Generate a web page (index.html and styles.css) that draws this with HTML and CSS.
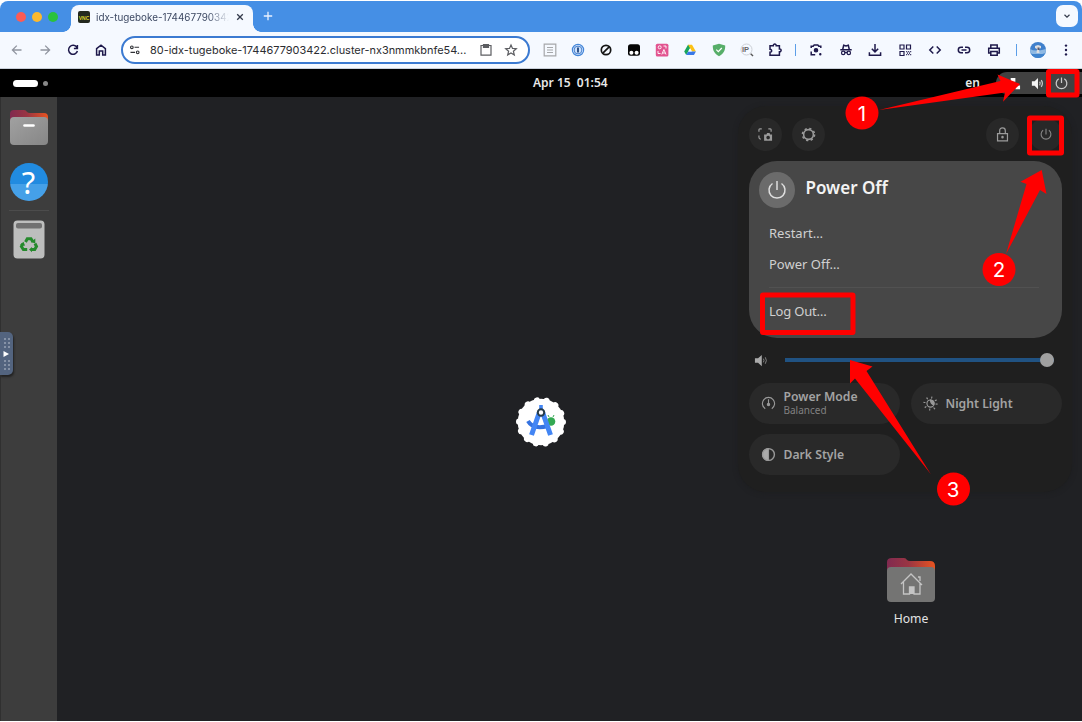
FILE: index.html
```html
<!DOCTYPE html>
<html lang="en">
<head>
<meta charset="utf-8">
<title>idx-tugeboke</title>
<link rel="stylesheet" href="styles.css">
</head>
<body>
<div class="browser">
  <header class="tabstrip">
    <div class="lights"><i class="red"></i><i class="amber"></i><i class="green"></i></div>
    <div class="tab">
      <span class="favicon">VNC</span>
      <span class="tab-title">idx-tugeboke-174467790342</span>
      <svg class="close" viewBox="0 0 8 8"><path d="M1.2 1.2l5.600 5.600M6.800 1.200l-5.600 5.600"/></svg>
    </div>
    <svg class="plus" viewBox="0 0 10 10"><path d="M5 .8v8.400M.8 5h8.400"/></svg>
    <div class="tab-menu"><svg viewBox="0 0 8 8"><path d="M1.500 2.800L4 5.200l2.500-2.400"/></svg></div>
  </header>

  <nav class="toolbar">
    <div class="nav">
      <svg class="ic muted" viewBox="0 0 20 20"><path d="M14.500 10H5.500M9.800 5.600L5.400 10l4.400 4.400"/></svg>
      <svg class="ic muted" viewBox="0 0 20 20"><path d="M5.500 10h9M10.200 5.600l4.400 4.400-4.400 4.400"/></svg>
      <svg class="ic" viewBox="0 0 20 20"><path class="thick" d="M13.900 7.500A4.500 4.500 0 1 0 14.400 11M14.400 5v3.500h-3.500"/></svg>
      <svg class="ic" viewBox="0 0 20 20"><path class="thick" d="M5.600 8.600L10 5.200l4.400 3.400v6.300h-2.700v-3.800H8.300v3.800H5.600z"/></svg>
    </div>
    <div class="address">
      <svg class="ic site" viewBox="0 0 20 20"><circle cx="6.500" cy="7" r="1.500"/><path d="M9.500 7h5M5 12.600h5"/><circle cx="13" cy="12.600" r="1.500"/></svg>
      <span class="url">80-idx-tugeboke-1744677903422.cluster-nx3nmmkbnfe54...</span>
      <svg class="ic grey" viewBox="0 0 20 20"><path d="M5 5.500h10v9.700H5z"/><path d="M7.500 4.500h5v3h-5z" fill="#5c5d61"/></svg>
      <svg class="ic grey" viewBox="0 0 20 20"><path d="M10 4.900l1.500 3.500 3.800.3-2.900 2.500.9 3.700-3.300-2-3.300 2 .9-3.700-2.900-2.500 3.800-.3z"/></svg>
    </div>
    <div class="extensions">
      <svg class="ic" viewBox="0 0 20 20"><g stroke="#a5a7aa"><path d="M4.200 4.200h11.600v11.600H4.200z"/><path d="M7 7.500h6M7 10h6M7 12.500h6"/></g></svg>
      <svg class="ic" viewBox="0 0 20 20"><circle cx="10" cy="10" r="5.600" fill="#dceaff" stroke="#4386d8"/><circle cx="10" cy="10" r="3.900" fill="#cfe2fb" stroke="#3675ca" stroke-width=".9"/><path d="M10 7.500v5" stroke="#123a75" stroke-width="1.700"/></svg>
      <svg class="ic" viewBox="0 0 20 20"><g stroke="#151515" stroke-width="1.700"><circle cx="10" cy="10" r="4.700"/><path d="M6.800 13.200l6.400-6.400"/></g></svg>
      <svg class="ic" viewBox="0 0 20 20"><rect x="4" y="4.300" width="12" height="11.400" rx="2.500" fill="#050505" stroke="none"/><circle cx="7.400" cy="12.800" r="2" fill="#fff" stroke="none"/><circle cx="12.600" cy="12.800" r="2" fill="#fff" stroke="none"/></svg>
      <svg class="ic" viewBox="0 0 20 20"><rect x="3.800" y="3.800" width="12.600" height="12.600" rx="1.500" fill="#e25490" stroke="none"/><g stroke="#fff" stroke-width=".9"><circle cx="7.700" cy="7.300" r="1.500"/><path d="M6 11v2.500h2.500M11.500 6h2.500v2.500M9.800 14.500l2.100-5 2.100 5M10.600 13h2.700"/></g></svg>
      <svg class="ic" viewBox="0 0 20 20"><g stroke="none"><path fill="#18a55c" d="M8 4.800L4.200 11.500l2 3.500 5.200-9.100z"/><path fill="#fbc116" d="M8 4.800h4l3.900 6.700H12z"/><path fill="#3979e8" d="M6.200 15l2-3.500h7.700l-2 3.500z"/><path fill="#f8fbff" d="M10 8.300l1.800 3.200H8.200z"/></g></svg>
      <svg class="ic" viewBox="0 0 20 20"><path fill="#57ae69" stroke="none" d="M10 3.800l6.200 1.800c.2 5-1.700 8.400-6.200 10.700-4.500-2.300-6.400-5.700-6.200-10.700z"/><path d="M7.300 9.600l2 2 3.500-3.600" stroke="#fff"/></svg>
      <svg class="ic" viewBox="0 0 20 20"><circle cx="9.500" cy="9.500" r="5.500" stroke="#c0c4ca" stroke-width=".8"/><text x="5" y="12.200" class="ip">IP</text><path d="M13.700 13.700l2.300 2.300" stroke="#555" stroke-width="1.400"/></svg>
      <svg class="ic" viewBox="0 0 20 20"><path class="thick" d="M5 5.700h3.300c-.1-2.200 3-2.200 2.900 0h3.200v3.200c2.300-.1 2.300 3 0 2.900v3.500H5v-3c2.200.1 2.200-3.200 0-3.100z"/></svg>
    </div>
    <i class="rule"></i>
    <div class="actions">
      <svg class="ic" viewBox="0 0 20 20"><path class="thick" d="M5.200 8V6.200h2l1-1.300h3.600l1 1.300h2V8M5.200 11.500v3.300h4"/><circle cx="10" cy="10.300" r="1.700" fill="#1e194b"/><circle cx="14.300" cy="14.200" r=".6" fill="#1e194b"/></svg>
      <svg class="ic" viewBox="0 0 20 20"><path class="thick" d="M4.300 9.700h11.400M6.700 9.500l1-4.200 2.300.7 2.300-.7 1 4.200M8.700 12.500h2.600"/><circle cx="7.200" cy="12.900" r="1.700"/><circle cx="12.800" cy="12.900" r="1.700"/></svg>
      <svg class="ic" viewBox="0 0 20 20"><path class="thick" d="M10 4v7.500M6.800 8.700l3.200 3.200 3.200-3.200M4.400 12.300v3h11.200v-3"/></svg>
      <svg class="ic" viewBox="0 0 20 20"><path d="M5 5h4v4H5zM11.500 5h4v4h-4zM5 11.500h4v4H5z"/><path stroke-dasharray="1 1" d="M11.200 11.700h5M12 13.200h4M11.200 14.700h5"/></svg>
      <svg class="ic" viewBox="0 0 20 20"><path class="thick" d="M8.300 6.500L4.800 10l3.500 3.500M11.700 6.500l3.500 3.500-3.500 3.500"/></svg>
      <svg class="ic" viewBox="0 0 20 20"><path class="thick" d="M9 7.300H7a2.700 2.700 0 0 0 0 5.400h2M11 7.300h2a2.700 2.700 0 0 1 0 5.400h-2M7.500 10h5"/></svg>
      <svg class="ic" viewBox="0 0 20 20"><path class="thick" d="M6.800 8V5h6.400v3M6.800 13H4.700V8.200h10.600V13h-2.100M6.800 11.500h6.400v3.700H6.800z"/></svg>
    </div>
    <i class="rule second"></i>
    <svg class="avatar" viewBox="0 0 16 16"><defs><clipPath id="av"><circle cx="8" cy="8" r="8"/></clipPath></defs><g clip-path="url(#av)"><path fill="#3f80cc" d="M0 0h16v16H0z"/><path fill="#8fb9e3" d="M0 7q5 3 16 0v5H0z"/><path fill="#3e83ce" d="M0 11q6 3 16 0v5H0z"/><path fill="#dcdde0" d="M5 4l3-1 3 1v2l-2 1 .5 4h-3L7 7 5 6z"/><path fill="#575a6c" d="M7.500 5.500h2v2.500h-2z"/></g></svg>
    <svg class="ic" viewBox="0 0 20 20"><g fill="#1e194b" stroke="none"><circle cx="10" cy="5.600" r="1.200"/><circle cx="10" cy="10" r="1.200"/><circle cx="10" cy="14.400" r="1.200"/></g></svg>
  </nav>

  <main class="screen">
    <div class="topbar">
      <div class="workspaces"><i class="current"></i><i class="other"></i></div>
      <time class="clock">Apr 15&nbsp; 01:54</time>
      <div class="status">
        <span>en</span>
        <div class="tray">
          <svg viewBox="0 0 16 16" class="net"><path fill="#fff" d="M5 2h5v4H5zM2 10h4v4H2zM10 10h5v4h-5z"/><path d="M7.500 6v2.500M4 10V8.500h8V10" stroke="#fff" fill="none"/></svg>
          <svg viewBox="0 0 16 16" class="sound"><path class="cone" d="M2 5.500h3L8.500 2v12L5 10.500H2z"/><path d="M10.300 6q1.300 2 0 4M12 4.500q2.400 3.500 0 7" /></svg>
          <svg viewBox="0 0 16 16" class="power"><path d="M8 1.500v6M5 3a5.700 5.700 0 1 0 6 0"/></svg>
        </div>
      </div>
    </div>

    <div class="desktop">
      <aside class="dock">
        <svg class="files" viewBox="0 0 40 38"><defs><linearGradient id="fold"><stop stop-color="#812a50"/><stop offset=".45" stop-color="#9a3543"/><stop offset="1" stop-color="#e95420"/></linearGradient><linearGradient id="silver" x2="1" y2="1"><stop stop-color="#a1a1a1"/><stop offset="1" stop-color="#868686"/></linearGradient></defs><path fill="url(#fold)" d="M1 12V5q0-4 4-4h10q2 0 3 2 1 1 3 1h14q4 0 4 4v9H1z"/><rect x="1" y="8" width="38" height="28" rx="4" fill="url(#silver)"/><path d="M15.500 16.500h9" stroke="#fff" stroke-width="2.600" stroke-linecap="round"/></svg>
        <div class="help">?</div>
        <hr>
        <svg class="trash" viewBox="0 0 32 39"><rect x=".5" y=".5" width="31" height="38" rx="4" fill="#bdbebd"/><rect x="3" y="3" width="26" height="5.500" rx="2" fill="#717171"/><g fill="none" stroke="#258a2c" stroke-width="3"><path d="M12.500 22l1.800-3.200h3.700l2 3.200"/><path d="M22 23.500l1.500 3-1.800 3.100h-3.500"/><path d="M14.200 29.600h-3.800l-2-3.100 1.600-2.700"/></g><path fill="#258a2c" d="M22.300 18.500v5l-4.300-1.500zM19 27v5.200l-3-2.600zM7 24.700l3.500-3 1.500 4z"/></svg>
      </aside>
      <section class="wallpaper">
        <svg class="studio" viewBox="0 0 50 50"><circle cx="25" cy="25" r="23.300" fill="#fff"/><circle class="scallop" cx="25" cy="25" r="22"/><circle cx="35" cy="24.500" r="4.300" fill="#33a852"/><path d="M33 20l-1-2M37 20l1-2" stroke="#33a852"/><path d="M12 24q5 9 20 5" fill="none" stroke="#3472e0" stroke-width="4"/><path d="M23.500 15L15.500 38M26.500 15l8 23" stroke="#4285f4" stroke-width="5"/><path d="M23.200 8h3.600v7h-3.600z" fill="#4285f4"/><circle cx="25" cy="15.500" r="3.200" fill="#fff" stroke="#253b4a" stroke-width="2"/></svg>
        <div class="home">
          <svg viewBox="0 0 48 46"><path fill="url(#fold)" d="M0 15V5q0-4 5-4h12q2 0 3 2 1 1 3 1h20q5 0 5 5v9H0z"/><rect y="10" width="48" height="35" rx="4" fill="#747473"/><path d="M14 27l10-10 11 11M16.500 25v12h6v-7h4.500v7h6V26M31 20h2v4" fill="none" stroke="#c4c4c4" stroke-width="1.300"/><path d="M22.500 30H27v7h-4.500z" fill="#c4c4c4"/></svg>
          <span>Home</span>
        </div>
      </section>
    </div>

    <div class="vnc-handle"><i class="grip"></i><svg viewBox="0 0 6 6"><path d="M.5 0L6 3 .5 6z" fill="#fff"/></svg><i class="grip"></i></div>

    <section class="quick">
      <div class="round-row">
        <span class="round"><svg viewBox="0 0 16 16"><path d="M1 5V3q0-1 1-1h2M11 2h2q1 0 1 1v2M1 9v2q0 2 2 2"/><path fill="#9b9b9b" fill-rule="evenodd" stroke="none" d="M6.500 8H9l.7-1.500h2.600L13 8h2v6.700H6.500zM10.800 9.300a1.900 1.900 0 1 0 .01 0z"/></svg></span>
        <span class="round"><svg viewBox="0 0 16 16"><circle cx="8" cy="8" r="6.500" stroke-dasharray="2.400 2.705" stroke-width="1.600"/><circle cx="8" cy="8" r="5.200" stroke-width="1.700"/></svg></span>
        <span class="round lock"><svg viewBox="0 0 16 16"><path d="M2.700 7h10.600v7.700H2.700zM5 7V4q0-3 3-3t3 3v3"/><circle cx="8" cy="10.800" r=".7"/></svg></span>
        <span class="round off"><svg viewBox="0 0 16 16"><path d="M8 1.500v6.500M4.700 3.200a5.600 5.600 0 1 0 6.600 0"/></svg></span>
      </div>
      <div class="power-card">
        <div class="power-head"><span class="big"><svg viewBox="0 0 20 20"><path d="M10 1v9M5.500 3.500a8 8 0 1 0 9 0"/></svg></span><h2>Power Off</h2></div>
        <ul><li>Restart…</li><li>Power Off…</li></ul>
        <hr>
        <div class="logout">Log Out…</div>
      </div>
      <div class="volume">
        <svg viewBox="0 0 16 16"><path fill="#aaa" d="M1 5.700h3.300L8.300 2v12l-4-3.700H1z"/><path d="M10 6q1.300 2 0 4M12 4.500q2.400 3.500 0 7" fill="none" stroke="#858585"/></svg>
        <div class="track"><i class="knob"></i></div>
      </div>
      <div class="tiles">
        <div class="tile"><svg viewBox="0 0 16 16"><path d="M4.500 13.500a6.500 6.500 0 1 1 7 0M8 3.500V8"/><circle cx="8" cy="9" r="1.200" fill="#999"/></svg><p><b>Power Mode</b><small>Balanced</small></p></div>
        <div class="tile"><svg viewBox="0 0 16 16"><circle cx="8" cy="8" r="6.500" stroke-dasharray="1.200 3.905" stroke-width="2.200"/><circle cx="8" cy="8" r="3.800"/><path d="M8 4.200a3.800 3.800 0 0 1 3.600 5Q8 8.500 8 4.200z" fill="#999"/></svg><p><b>Night Light</b></p></div>
        <div class="tile"><svg viewBox="0 0 16 16"><circle cx="8" cy="8" r="6.300" stroke-width="1.500"/><path d="M8 1.700a6.300 6.300 0 0 0 0 12.600z" fill="#aaa"/></svg><p><b>Dark Style</b></p></div>
      </div>
    </section>
  </main>
</div>

<svg class="notes" viewBox="0 0 1082 722">
  <g class="frames"><rect x="1048.500" y="71.500" width="28.500" height="23.500" rx=".5"/><rect x="1029.500" y="118" width="32" height="35" rx=".5"/><rect x="762.500" y="295" width="90.500" height="37.500" rx=".5"/></g>
  <g class="fill"><path d="M879 110L1005 92.500 1003 101.700 1020 84 997.500 74.500 1000.500 81z"/><path d="M1006 254L1026.500 184 1020.500 181.700 1041.700 170 1046.500 194 1040 190z"/><path d="M850 360L872.500 366.500 866.500 371 930.700 474 855 378.500 850 383.500z"/><circle cx="862" cy="113" r="16.500"/><circle cx="999" cy="269.500" r="16.500"/><circle cx="953.500" cy="489" r="16.500"/></g>
  <g class="digits"><text x="862" y="120.500">1</text><text x="999" y="277">2</text><text x="953" y="496.500">3</text></g>
</svg>
</body>
</html>
```
FILE: styles.css
```css
* { box-sizing: border-box; }
body { margin: 0; width: 1082px; height: 722px; overflow: hidden; background: #fff; font-family: "Noto Sans", sans-serif; }
.browser { position: relative; height: 722px; padding-top: 1px; }
svg { display: block; flex: none; }
h2, p, ul { margin: 0; padding: 0; list-style: none; }

.tabstrip { display: flex; height: 31px; background: #458fe5; border-radius: 8px 8px 0 0; }
.lights { display: flex; gap: 6px; align-items: center; width: 71px; padding-left: 16px; }
.lights i { width: 10px; height: 10px; border-radius: 50%; }
.red { background: #fc5b55; }
.amber { background: #fcb92d; }
.green { background: #2ac23d; }
.tab { display: flex; align-items: center; width: 182px; height: 27px; margin-top: 4px; padding: 0 9px 4px 7px; background: #f5f9ff; border-radius: 8px 8px 0 0; position: relative; }
.tab::before, .tab::after { content: ""; position: absolute; bottom: 0; width: 8px; height: 8px; }
.tab::before { left: -8px; background: radial-gradient(circle at 0 0, #458fe5 7.500px, #f5f9ff 8px); }
.tab::after { right: -8px; background: radial-gradient(circle at 100% 0, #458fe5 7.500px, #f5f9ff 8px); }
.favicon { width: 12px; height: 12px; border-radius: 2px; background: #24291f; color: #dfd42a; font: bold 5px/14px "Liberation Sans", sans-serif; text-align: center; }
.tab-title { width: 133px; margin-left: 6px; white-space: nowrap; font: 9.900px/14px Inter, sans-serif; color: #3d4963; -webkit-mask-image: linear-gradient(90deg, #000 112px, transparent 133px); }
.close { width: 8px; height: 8px; margin-left: auto; fill: none; stroke: #333a4b; stroke-width: 1.300; }
.plus { width: 10px; height: 10px; margin: 10px 0 0 10px; fill: none; stroke: #e8f1ff; stroke-width: 1.300; }
.tab-menu { display: flex; align-items: center; justify-content: center; width: 22px; height: 22px; margin: 4px 4px 0 auto; border-radius: 7px; background: #f5f9ff; }
.tab-menu svg { width: 8px; fill: none; stroke: #333a4b; stroke-width: 1.200; }

.toolbar { display: flex; align-items: center; height: 37px; padding-left: 7px; background: #f5f9ff; border-bottom: 1px solid #c9d0da; }
.ic { width: 20px; height: 20px; fill: none; stroke: #1e194b; stroke-width: 1.200; }
.thick { stroke-width: 1.500; }
.muted { stroke: #9095a0; stroke-width: 1.300; }
.grey { stroke: #5c5d61; }
.nav { display: flex; gap: 8px; }
.address { display: flex; align-items: center; width: 409px; height: 28px; margin-left: 10px; padding-left: 3px; border: 2px solid #3b7ad1; border-radius: 14px; background: #fff; }
.site { width: 18px; stroke: #303136; }
.url { width: 326px; margin-left: 6px; font: 10.950px/16px Inter, sans-serif; color: #2b2c30; white-space: nowrap; }
.address .grey + .grey { margin-left: 5px; }
.extensions { display: flex; gap: 8.100px; margin-left: 10px; }
.ip { font: bold 7.500px "Liberation Sans", sans-serif; fill: #666; stroke: none; }
.rule { width: 1.500px; height: 12px; margin-left: 10px; background: #5c9ee8; }
.actions { display: flex; gap: 9.600px; margin-left: 10px; }
.rule.second { margin-left: 12px; }
.avatar { width: 16px; height: 16px; margin: 0 10px 0 13px; }

.screen { display: flex; flex-direction: column; height: 652px; }
.topbar { display: grid; grid-template-columns: 520px auto 1fr; align-items: center; height: 28px; padding-left: 13px; background: #000; color: #e8e8e8; font-size: 12px; font-weight: 600; }
.workspaces { display: flex; align-items: center; gap: 5px; }
.current { width: 25px; height: 7px; border-radius: 4px; background: #fff; }
.other { width: 5px; height: 5px; border-radius: 50%; background: #888; }
.clock { margin-top: -1px; line-height: 27px; }
.status { display: flex; align-items: center; justify-content: flex-end; gap: 16px; }
.status span { margin-top: -2px; }
.tray { display: flex; align-items: center; gap: 9px; width: 86px; height: 22px; padding-left: 10px; border-radius: 11px 0 0 11px; background: #414141; }
.tray svg { width: 15px; height: 15px; fill: none; stroke: #ccc; stroke-width: 1.300; }
.tray .net { stroke: none; }
.cone { fill: #f5f5f5; stroke: none; }
.desktop { display: flex; flex: 1; background: #202124; }
.dock { display: flex; flex-direction: column; align-items: center; width: 57px; padding: 12px 1px 0 0; background: #3d3d3d; border-left: 1px solid #303030; }
.files { width: 40px; height: 38px; }
.help { width: 38px; height: 38px; margin-top: 16px; border-radius: 50%; background: linear-gradient(#218be0 54%, #45a0e8 55%); color: #fff; font: 400 31px/38px "Noto Sans", sans-serif; text-align: center; }
.dock hr { width: 40px; margin: 9px 0; border: 0; border-top: 1px solid #4c4c4c; }
.trash { width: 32px; height: 39px; }
.wallpaper { position: relative; flex: 1; }
.studio { position: absolute; left: 459px; top: 300px; width: 50px; height: 50px; }
.scallop { fill: none; stroke: #fff; stroke-width: 6; stroke-linecap: round; stroke-dasharray: .1 9.774; }
.home { position: absolute; left: 824px; top: 460px; display: flex; flex-direction: column; align-items: center; width: 60px; color: #e4e4e4; font-size: 12.200px; line-height: 16px; }
.home svg { width: 48px; height: 46px; margin-bottom: 8px; }
.vnc-handle { position: absolute; left: 0; top: 332px; width: 13px; height: 43px; padding: 5px 3px; border-radius: 0 5px 5px 0; background: #53647f; box-shadow: 1px 2px 2px #222; display: flex; flex-direction: column; justify-content: space-between; }
.grip { height: 11px; background: radial-gradient(circle, #8794a8 .7px, transparent 1px) 0 0 / 4px 4px; }
.vnc-handle svg { width: 6px; height: 6px; }

.quick { position: absolute; left: 738px; top: 106px; width: 334px; height: 386px; padding: 12px 10px 0 11px; border-radius: 28px; background: #1f1f1f; box-shadow: 0 1px 5px #1d1e20; color: #9b9b9b; }
.round-row { display: flex; gap: 10px; height: 33px; }
.round { display: flex; align-items: center; justify-content: center; width: 33px; height: 33px; border-radius: 50%; background: #282828; }
.round svg { width: 15px; height: 15px; fill: none; stroke: #9b9b9b; stroke-width: 1.300; }
.lock { margin-left: auto; }
.off svg { width: 14px; stroke: #858585; }
.power-card { height: 177px; margin: 10px 0 0 -.5px; padding: 11px 23px 0 10px; border-radius: 28px; background: #474747; }
.power-head { display: flex; align-items: center; gap: 11px; }
.big { display: flex; align-items: center; justify-content: center; width: 36px; height: 36px; border-radius: 50%; background: #6b6b6b; }
.big svg { width: 20px; height: 20px; fill: none; stroke: #dedede; stroke-width: 1.500; }
.power-head h2 { font-size: 17px; line-height: 32px; font-weight: 600; color: #f3f3f3; margin-top: -4px; }
.power-card ul { padding: 10px 0 0 10.500px; }
.power-card li, .logout { font-size: 13px; line-height: 31px; color: #d0d0d0; }
.power-card hr { margin: 7px 0 8px 10px; border: 0; border-top: 1px solid #515151; }
.logout { padding-left: 10.500px; letter-spacing: -.2px; }
.volume { display: flex; align-items: center; height: 44px; padding: 0 8px 0 5px; }
.volume svg { width: 15px; height: 15px; }
.track { display: flex; align-items: center; justify-content: flex-end; width: 270px; height: 4px; margin-left: 16px; background: #205282; }
.knob { width: 14px; height: 14px; border-radius: 50%; background: #a0a0a0; }
.tiles { display: grid; grid-template-columns: 151px 151px; gap: 10px 11px; padding-top: 1px; }
.tile { display: flex; align-items: center; gap: 8px; height: 41px; padding-left: 11.500px; border-radius: 21px; background: #292929; }
.tile svg { width: 15px; height: 15px; fill: none; stroke: #999; stroke-width: 1.200; }
.tile b, .tile small { display: block; white-space: nowrap; }
.tile b { font-size: 12.200px; line-height: 15px; font-weight: 600; color: #a3a3a3; }
.tile small { font-size: 10px; line-height: 13px; color: #818181; }
.tile small { margin-bottom: 1px; }

.notes { position: absolute; left: 0; top: 0; width: 1082px; height: 722px; }
.frames { fill: none; stroke: #f00; stroke-width: 5; }
.fill { fill: #f00; }
.digits { fill: #fff; font: 400 20.500px Inter, sans-serif; text-anchor: middle; }
```
